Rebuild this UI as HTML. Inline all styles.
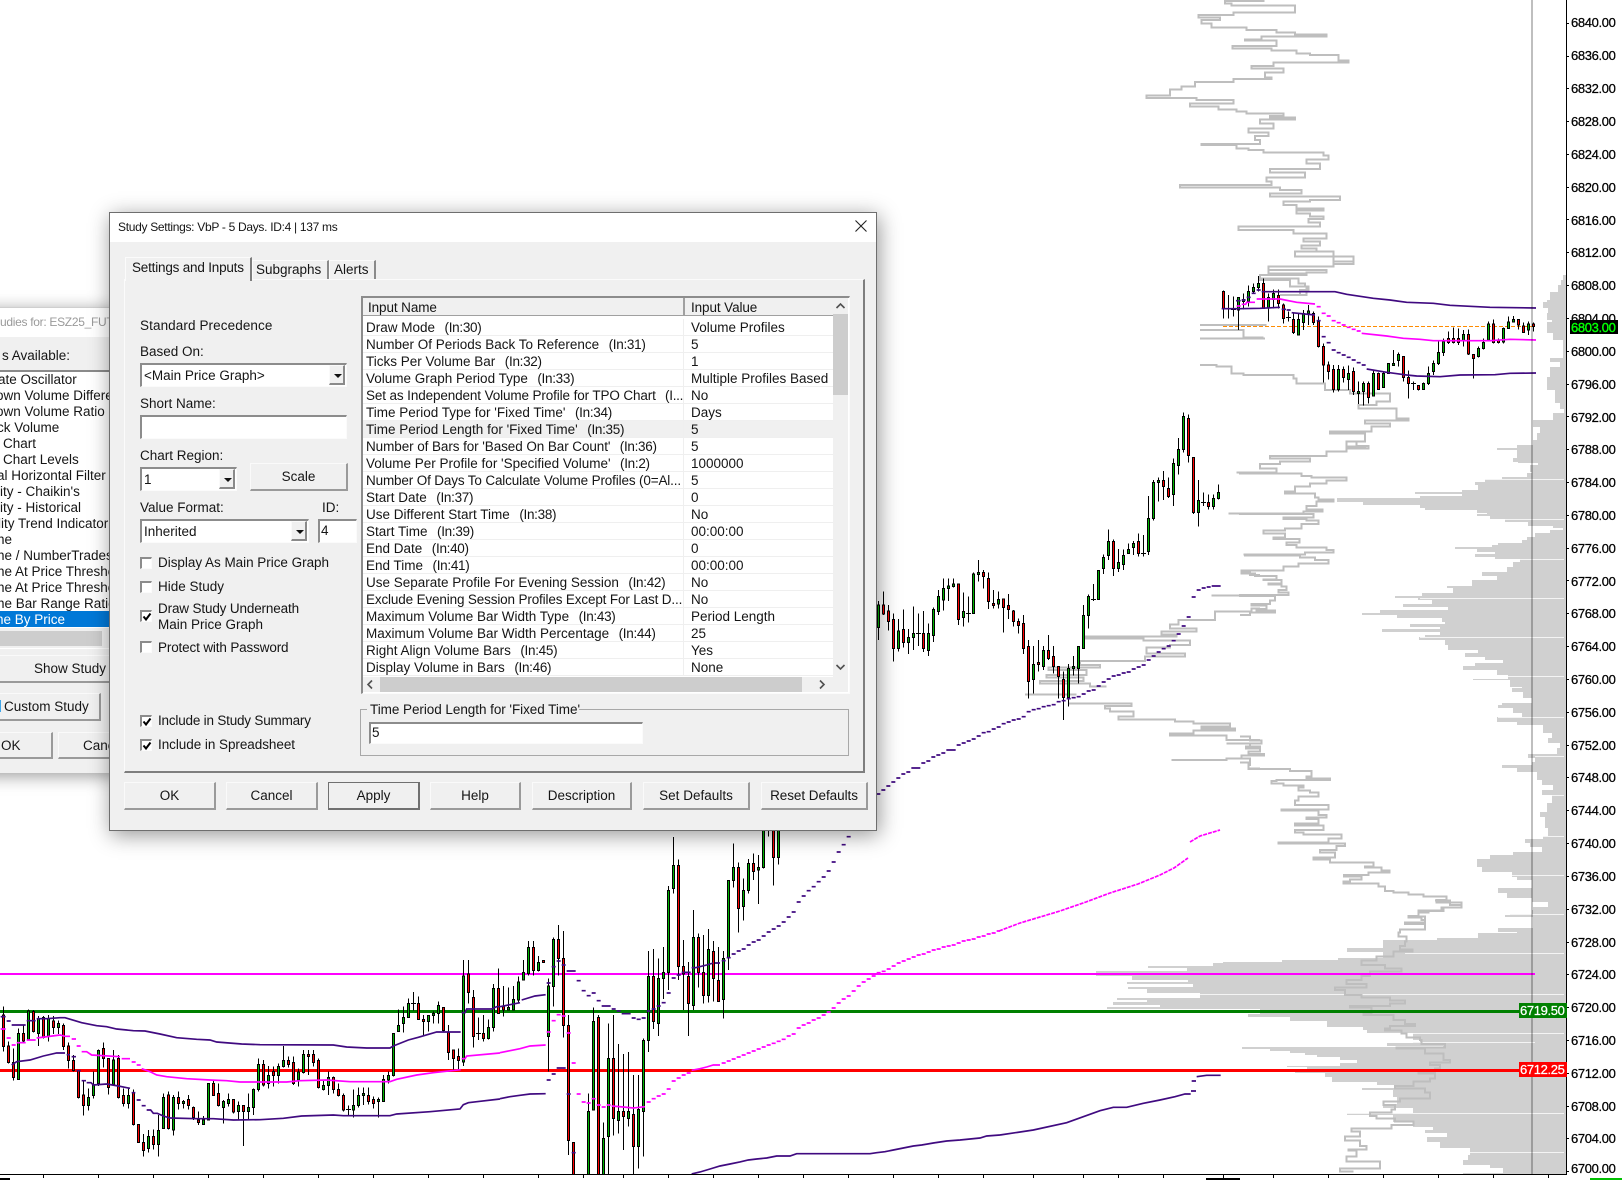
<!DOCTYPE html>
<html><head><meta charset="utf-8"><title>Study Settings</title>
<style>
html,body{margin:0;padding:0;background:#fff}
body{width:1622px;height:1180px;position:relative;overflow:hidden;font-family:"Liberation Sans",sans-serif;color:#111}
.a{position:absolute;box-sizing:border-box}
.l{position:absolute;white-space:pre;font-size:13.5px;line-height:16px;color:#151515;margin-top:1px}
.b{position:absolute;box-sizing:border-box;background:#f0f0f0;border-style:solid;border-width:1px 2px 2px 1px;border-color:#fafafa #9a9a9a #9a9a9a #fafafa;text-align:center;font-size:13.5px;white-space:pre;color:#151515;padding-top:1px}
.s{position:absolute;box-sizing:border-box;background:#fff;border-style:solid;border-width:2px 1px 1px 2px;border-color:#8c8c8c #fbfbfb #fbfbfb #8c8c8c;font-size:13.5px;white-space:pre;color:#151515;padding-top:1px}
.d{position:absolute;box-sizing:border-box;background:#f0f0f0;border-style:solid;border-width:1px 2px 2px 1px;border-color:#fafafa #8a8a8a #8a8a8a #fafafa}
.d:after{content:"";position:absolute;left:4px;top:8px;border-style:solid;border-width:4px 4px 0 4px;border-color:#111 transparent transparent transparent}
.c{position:absolute;box-sizing:border-box;width:12px;height:12px;background:#fff;border-style:solid;border-width:2px 1px 1px 2px;border-color:#8c8c8c #fbfbfb #fbfbfb #8c8c8c}
.c svg{position:absolute;left:-1px;top:-1px}
.r{position:absolute;left:363px;width:470px;height:17px;border-bottom:1px solid #efefef;box-sizing:border-box;font-size:13.5px;line-height:16px;white-space:pre;color:#151515}
.r span{position:absolute;top:1px}
.r .n{left:3px;width:317px;overflow:hidden}
.r .v{left:328px}
.r i{font-style:normal;margin-left:2px;letter-spacing:-.3px}
.r:after{content:"";position:absolute;left:320px;top:0;width:1px;height:17px;background:#efefef}
</style></head><body>
<svg class="a" style="left:0;top:0" width="1622" height="1180" viewBox="0 0 1622 1180" xmlns="http://www.w3.org/2000/svg">
<!-- filled profile -->
<path fill="#d0d0d0" shape-rendering="crispEdges" d="M1566 275H1563V280H1561V285H1558V292H1550V300H1547V302H1543V308H1548V313H1547V320H1552V322H1547V333H1553V340H1563V350H1563V358H1550V362H1560V367H1550V377H1547V390H1555V403H1560V409H1564V413H1553V420H1533V427H1540V433H1537V440H1533V445H1517V448H1497V450H1517V458H1513V462H1518V463H1538V465H1530V472H1532V473H1527V477H1502V479H1485V482H1475V485H1478V490H1462V492H1415V494H1462V496H1420V498H1337V502H1363V505H1420V508H1425V510H1477V513H1487V514H1477V516H1490V519H1505V522H1528V526H1553V528H1563V530H1550V533H1535V537H1527V540H1522V543H1498V545H1492V547H1455V549H1477V552H1495V554H1475V557H1495V559H1520V562H1513V567H1507V572H1482V576H1497V580H1472V586H1447V588H1453V593H1422V596H1395V598H1418V600H1432V604H1403V607H1448V610H1380V613H1362V615H1397V618H1442V622H1445V624H1410V627H1440V629H1382V632H1440V635H1425V637H1419V640H1445V645H1448V650H1478V653H1465V657H1485V660H1503V663H1475V666H1463V670H1497V675H1508V679H1473V680H1510V687H1522V688H1512V692H1523V698H1532V703H1502V705H1498V708H1513V713H1522V717H1497V722H1517V725H1543V733H1552V738H1548V743H1560V748H1557V754H1528V758H1535V762H1532V765H1502V768H1517V772H1537V780H1542V785H1553V790H1542V795H1552V803H1547V812H1540V817H1545V828H1548V836H1543V839H1525V843H1530V847H1542V852H1513V855H1490V859H1477V867H1482V872H1512V877H1517V880H1532V888H1498V893H1507V898H1532V902H1548V907H1533V910H1532V915H1505V917H1533V928H1498V932H1517V933H1478V938H1437V940H1383V948H1347V952H1383V958H1338V960H1282V962H1223V963H1213V966H1148V968H1187V971H1096V976H1132V980H1188V982H1127V984H1193V987H1128V989H1147V993H1200V998H1117V1000H1147V1002H1113V1005H1160V1007H1107V1009H1260V1014H1248V1017H1290V1021H1327V1027H1363V1030H1367V1033H1413V1040H1420V1043H1387V1046H1443V1047H1242V1049H1270V1051H1290V1053H1305V1055H1317V1057H1340V1060H1357V1063H1340V1066H1287V1067H1307V1070H1295V1073H1325V1077H1332V1082H1377V1085H1395V1088H1362V1090H1393V1097H1397V1104H1383V1108H1413V1113H1347V1115H1393V1122H1413V1127H1433V1130H1425V1133H1447V1137H1427V1142H1440V1148H1470V1155H1468V1160H1463V1165H1490V1168H1503V1173H1463V1174H1566Z"/>
<path stroke="#f4f4f4" stroke-width="1" fill="none" shape-rendering="crispEdges" d="M1485 479.5H1564M1505 519.5H1564M1520 559.5H1564M1420 598.5H1564M1420 637.5H1564M1508 676.5H1564M1498 717.5H1564M1535 756.5H1564M1552 795.5H1564M1543 836.5H1564M1512 875.5H1564M1510 914.5H1564M1405 953.5H1564M1200 994.5H1564M1413 1033.5H1564M1413 1042.5H1535M1347 1113.5H1564M1470 1152.5H1564"/>
<!-- outline profile -->
<g fill="none" stroke="#bebebe" stroke-width="6" shape-rendering="crispEdges">
<g transform="translate(1100,0) scale(.33333)"><path d="M490 0V3H375V10H395V17H585V38H400V45H295V52H360V60H305V70H335V82H440V90H530V97H585V103H680V110H485V118H435V122H530V138H398V145H515V152H590V160H630V165H715V182H745V187H520V198H455V205H550V217H495V232H515V237H400V246H285V260H245V268H210V287H140V294H290V300H400V310H270V320H355V328H410V335H440V340H550V348H510V353H585V358H480V370H520V385H445V398H505V408H465V420H480V432H305V435H410V445H445V450H490V458H670V467H685V478H620V490H660V507H510V518H615V532H500V545H515V555H240V562H540V570H605V580H510V590H720V600H630V605H550V615H590V625H670V632H590V640H630V650H670V657H625V668H660V680H415V690H580V700H680V715H610V725H660V737H605V745H650V755H585V770H700V785H760V792H700V800H505V810H680V818H620V825H480V835H595V850H615V860H625V870H600V885H620"/></g>
<g transform="translate(1200,250) scale(.33333)"><path d="M285 5H400V20H460V35H400V50H205V70H320V75H180V90H270V110H320V135H240M0 225H200M0 240H130V262H190M0 265H195M0 345H50V350H95V370H130V375H280V385H290V400H375V420H450V430H570V455H530V465H475V475H590V505H625V512H495V520H570V530H515V545H390V550H495V575H440V590H500"/></g>
<g transform="translate(860,400) scale(.33333)"><path d="M1130 217H1200M1105 340H1200M1150 463H1200M1148 515H1170V525H1200M1055 587H1200M1200 625H1175V635H1065V650H1065V660H955V673H930V685H1010V695H905V703H950V710H675V715H850V722H990V735H930V742H860V760H975V770H855V783H660V795H720V802H565V810H680V825H560V833H670V843H540V850H690V860H740M495 883H650M625 910H815V918H735V925H750V935H820V950H775V958H945V965H1000V970H1110V980H1025V985H1125V992H1000V1000H930V1007H1100V1020H1200M1100 1030H1170V1040H1195M1155 1045H1200M935 1080H1100V1075H1170V1095H1165V1105H1200"/></g>
<g transform="translate(1240,440) scale(.33333)"><path d="M320 5H350V18H385V25H320V35H260V48H90V55H210V65H120V72H60V85H110V97H0V100H185V108H215V112H320V122H260V130H210V140H165V155H135V160H225V172H235V178H280V185H230V198H200V208H248V215H190V220H0V222H220V232H130V237H200V242H235V252H185V265H135V272H70V280H135V292H100V297H178V308H140V315H170V322H260V330H280V338H195V343H15V347H180V352H225V360H265V370H175V380H130V392H5V400H45V408H110V418H70V420H125V430H85V433H125V440H140V450H115V457H145V465H0V468H105V482H90V492H35V497H80V507H50V512H105V517H30V525H0"/></g>
<g transform="translate(1240,680) scale(.33333)"><path d="M0 170H30V182H65V190H0M15 200H60V215H25V222H72V227H5V235H0M0 248H25V267H150V273H215V290H200V295H270V300H110V303H95V310H130V316H190V322H175V332H210V338H235V350H175V362H165V375H265V388H125V392H235V405H260V412H200V417H235V430H165V437H250V450H165V457H190V463H305V475H265V487H115V490H315V498H290V510H240V518H285V532H220V538H270V548H400V560H375V563H425V572H448V578H385V585H312V590H365V598H330V605H310V610H415V620H435V633H460V637H505V643H550V650H620V660H590V668H665V682H605V692H535V708H505V712H545V720H555"/></g>
<g transform="translate(1100,900) scale(.33333)"><path d="M1005 2H1050V15H1085V22H1030V33H985V38H955V48H925V50H975V68H915V72H975V88H900V98H895V110H920V125H915V138H900V148H938V155H880V170H830V182H785V195H855V205H905V215H810V228H785V240H740V252H800V262H705V270H735V285H785V293H870V302H915V310H870V318H750V322H815V342H790V345H880V360H915V372H945V378H870V385H855V392H905V400H920V412H960V420H965V432H1035V442H890V445H975V460H1030V480H1050V488H990V495H1020V505H1005V518H955V520H1005V535H990V545H940V558H885V565H975V578H990V595H900V605H850V615H885V628H875V638H810V648H830V655H885V665H940V675H875V685H755V695H780V710H735V722H780V738H800V748H745V752H770V770H740V785H840V805H720V815H760"/></g>
</g>
<!-- horizontal lines -->
<g shape-rendering="crispEdges">
<rect x="0" y="973" width="1535" height="2" fill="#f0f"/>
<rect x="0" y="1010" width="1520" height="3" fill="#008000"/>
<rect x="0" y="1069" width="1520" height="3" fill="#f00"/>
</g>
<path d="M1223 326.5H1533" stroke="#ff8c00" stroke-width="1" stroke-dasharray="4 2" shape-rendering="crispEdges"/>
<!-- candles A -->
<g transform="translate(.17,960) scale(.33333)" shape-rendering="crispEdges" stroke="#000" stroke-width="3">
<path fill="none" d="M10 140V275M25 245V310M40 265V362M55 205V358M70 195V250M85 148V240M100 150V218M115 168V258M130 168V235M145 165V245M160 168V222M175 182V222M190 190V270M205 248V325M220 285V335M235 330V415M250 362V467M265 385V452M280 335V415M295 268V378M310 247V322M325 295V403M340 270V375M355 285V415M370 385V440M385 385V445M400 388V497M430 522V590M445 510V578M460 508V568M475 465V590M490 400V505M505 395V508M520 405V527M535 395V448M550 420V446M565 405V448M580 440V480M595 455V495M610 468V495M640 358V408M655 370V440M670 420V490M685 400V440M700 418V460M715 425V480M730 436V558M745 400V478M760 385V465M775 295V395M790 300V380M805 318V385M820 320V380M835 310V370M850 258V322M865 290V322M880 290V375M895 325V380M910 270V340M925 270V345M940 270V320M955 295V385M970 360V392M985 335V405M1000 350V400M1015 370V410M1030 400V455M1045 436V468M1037 449H1053M1060 388V472M1075 382V442M1090 382V435M1105 382V434M1120 410V445M1135 412V472M1150 345V425M1165 335V370M1180 220V350M1195 148V215M1210 140V218M1225 115V172M1240 96V152M1232 130H1248M1255 110V178M1270 165V225M1285 165V215M1300 155V190M1315 125V190M1330 142V215M1345 195V300M1360 270V328M1375 265V328M1390 0V318M1405 0V130M1420 90V262M1435 172V240M1427 220H1443M1450 165V245M1465 178V238M1480 72V215M1495 25V160"/>
<path fill="#00b400" d="M52 220h6V358h-6zM82 153h6V238h-6zM112 175h6V220h-6zM142 175h6V228h-6zM172 190h6V203h-6zM262 412h6V436h-6zM277 375h6V406h-6zM292 272h6V370h-6zM337 300h6V373h-6zM382 406h6V430h-6zM442 530h6V565h-6zM472 512h6V553h-6zM487 412h6V505h-6zM517 412h6V510h-6zM547 424h6V430h-6zM607 480h6V493h-6zM622 370h6V480h-6zM667 425h6V442h-6zM682 418h6V430h-6zM712 436h6V454h-6zM742 442h6V454h-6zM757 388h6V442h-6zM772 313h6V388h-6zM802 346h6V370h-6zM832 319h6V346h-6zM847 302h6V319h-6zM892 336h6V360h-6zM907 283h6V337h-6zM967 376h6V388h-6zM982 352h6V376h-6zM1057 436h6V450h-6zM1072 406h6V436h-6zM1087 400h6V406h-6zM1132 418h6V425h-6zM1147 358h6V424h-6zM1162 346h6V360h-6zM1177 220h6V346h-6zM1192 196h6V214h-6zM1207 172h6V190h-6zM1222 130h6V172h-6zM1282 166h6V184h-6zM1297 160h6V166h-6zM1312 136h6V160h-6zM1387 48h6V306h-6zM1462 202h6V236h-6zM1477 85h6V202h-6z"/>
<path fill="#f00" d="M7 165h6V260h-6zM22 258h6V308h-6zM37 308h6V352h-6zM67 220h6V243h-6zM97 155h6V215h-6zM127 172h6V232h-6zM157 183h6V202h-6zM187 197h6V260h-6zM202 258h6V302h-6zM217 302h6V332h-6zM232 332h6V412h-6zM247 405h6V436h-6zM307 265h6V295h-6zM322 295h6V382h-6zM352 295h6V412h-6zM367 406h6V430h-6zM397 398h6V493h-6zM412 493h6V548h-6zM427 548h6V572h-6zM457 530h6V554h-6zM502 405h6V505h-6zM532 412h6V430h-6zM562 418h6V436h-6zM577 442h6V473h-6zM592 480h6V487h-6zM637 370h6V407h-6zM652 400h6V436h-6zM697 418h6V456h-6zM727 436h6V454h-6zM787 313h6V375h-6zM817 335h6V346h-6zM862 302h6V313h-6zM877 307h6V370h-6zM922 283h6V290h-6zM937 283h6V307h-6zM952 302h6V382h-6zM997 352h6V388h-6zM1012 388h6V407h-6zM1027 406h6V450h-6zM1102 406h6V425h-6zM1117 418h6V430h-6zM1252 130h6V178h-6zM1267 178h6V184h-6zM1327 142h6V212h-6zM1342 218h6V277h-6zM1357 270h6V296h-6zM1372 290h6V302h-6zM1402 42h6V98h-6zM1417 112h6V230h-6zM1447 220h6V236h-6zM1492 85h6V160h-6z"/>
</g>
<!-- candles B -->
<g transform="translate(500.17,830) scale(.33333)" shape-rendering="crispEdges" stroke="#000" stroke-width="3">
<path fill="none" d="M10 468V560M25 473V540M40 468V540M55 440V520M70 390V450M85 333V436M100 333V436M115 378V425M145 445V725M160 322V530M175 285V436M190 303V622M205 555V975M265 790V1035M280 532V842M295 555V1035M310 877V1035M325 580V1035M340 555V916M355 642V910M370 672V960M385 666V890M400 735V1035M415 735V1016M430 625V980M445 363V666M460 357V597M475 385V618M490 351V507M505 168V480M520 21V190M535 88V450M550 330V540M565 396V618M580 240V540M595 310V472M610 315V520M625 297V517M640 333V515M655 351V515M670 363V566M685 150V420M700 40V173M715 98V308M730 145V272M745 87V190M760 70V150M775 75V222M790 0V116M805 0V20M820 0V167M835 0V104"/>
<path fill="#00b400" d="M22 532h6V540h-6zM37 508h6V540h-6zM52 456h6V510h-6zM67 427h6V450h-6zM82 352h6V430h-6zM112 397h6V422h-6zM142 468h6V620h-6zM157 328h6V470h-6zM262 844h6V1035h-6zM277 574h6V840h-6zM307 925h6V1035h-6zM322 685h6V920h-6zM352 844h6V872h-6zM382 844h6V865h-6zM412 838h6V950h-6zM427 631h6V845h-6zM442 439h6V632h-6zM472 445h6V580h-6zM487 427h6V445h-6zM502 181h6V427h-6zM517 106h6V175h-6zM577 322h6V527h-6zM622 358h6V496h-6zM667 385h6V508h-6zM682 151h6V382h-6zM697 112h6V152h-6zM727 181h6V230h-6zM742 100h6V181h-6zM772 112h6V120h-6zM787 -3h6V112h-6zM832 -3h6V82h-6z"/>
<path fill="#f00" d="M7 530h6V540h-6zM97 352h6V422h-6zM127 392h6V398h-6zM172 328h6V386h-6zM187 385h6V586h-6zM202 586h6V932h-6zM217 937h6V1035h-6zM292 562h6V1035h-6zM337 685h6V866h-6zM367 844h6V860h-6zM397 853h6V950h-6zM457 439h6V574h-6zM532 106h6V410h-6zM547 409h6V432h-6zM562 439h6V520h-6zM592 322h6V428h-6zM607 427h6V496h-6zM637 364h6V446h-6zM652 451h6V514h-6zM712 112h6V236h-6zM757 100h6V124h-6zM817 -3h6V83h-6z"/>
</g>
<!-- candles C -->
<g transform="translate(860.17,400) scale(.33333)" shape-rendering="crispEdges" stroke="#000" stroke-width="3">
<path fill="none" d="M55 603V720M70 575V645M85 615V692M100 640V785M115 657V755M130 628V743M145 687V762M160 620V750M175 640V738M167 700H183M190 633V756M205 670V768M220 622V726M235 570V645M250 535V632M265 535V603M280 535V563M295 552V675M310 577V680M325 590V668M317 640H333M340 517V642M355 480V545M370 510V565M385 517V627M400 570V626M415 575V626M430 597V698M445 582V657M460 630V680M475 655V700M490 645V762M505 720V895M520 738V880M535 720V815M550 738V810M565 705V780M580 738V820M595 800V895M610 815V960M625 792V920M640 768V827M655 740V850M670 615V746M685 583V686M700 552V603M692 598H708M715 510V600M730 463V522M745 388V480M760 418V528M775 447V516M790 448V510M805 430V462M820 423V465M835 400V470M850 405V470M842 460H858M865 288V465M880 240V362M895 232V305M910 213V300M925 232V294M940 175V318M955 114V224M970 37V158M985 43V188M1000 172V342M1015 240V380M1030 277V318M1022 308H1038M1045 283V328M1060 283V328M1075 253V298"/>
<path fill="#00b400" d="M52 615h6V683h-6zM112 693h6V746h-6zM142 712h6V728h-6zM157 700h6V712h-6zM202 700h6V752h-6zM217 628h6V707h-6zM232 590h6V635h-6zM247 565h6V600h-6zM262 558h6V566h-6zM277 552h6V560h-6zM307 634h6V653h-6zM337 522h6V640h-6zM352 517h6V523h-6zM412 598h6V612h-6zM517 793h6V838h-6zM547 751h6V799h-6zM622 805h6V893h-6zM637 799h6V806h-6zM652 740h6V806h-6zM667 646h6V745h-6zM682 589h6V646h-6zM712 511h6V598h-6zM727 472h6V505h-6zM742 424h6V466h-6zM772 487h6V505h-6zM787 466h6V493h-6zM802 448h6V460h-6zM817 430h6V442h-6zM862 355h6V455h-6zM877 247h6V356h-6zM892 241h6V247h-6zM937 190h6V283h-6zM952 148h6V196h-6zM967 49h6V148h-6zM1012 301h6V338h-6zM1057 296h6V320h-6zM1072 278h6V296h-6z"/>
<path fill="#f00" d="M67 615h6V642h-6zM82 633h6V665h-6zM97 658h6V746h-6zM127 688h6V728h-6zM187 700h6V746h-6zM292 552h6V659h-6zM367 517h6V529h-6zM382 535h6V605h-6zM397 610h6V617h-6zM427 597h6V623h-6zM442 616h6V628h-6zM457 633h6V665h-6zM472 664h6V677h-6zM487 670h6V746h-6zM502 739h6V845h-6zM532 787h6V793h-6zM562 751h6V776h-6zM577 770h6V800h-6zM592 800h6V830h-6zM607 838h6V893h-6zM757 424h6V505h-6zM832 424h6V461h-6zM907 241h6V259h-6zM922 265h6V289h-6zM982 55h6V166h-6zM997 172h6V338h-6zM1042 308h6V319h-6z"/>
</g>
<!-- candles D -->
<g transform="translate(1200.17,250) scale(.33333)" shape-rendering="crispEdges" stroke="#000" stroke-width="3">
<path fill="none" d="M70 122V205M85 135V205M77 175H93M100 140V200M92 178H108M115 142V240M130 130V178M145 107V170M160 100V130M175 78V125M190 85V175M205 130V215M220 118V175M235 118V175M250 160V220M265 185V215M257 203H273M280 190V252M295 190V255M310 180V240M325 165V225M340 185V225M355 200V292M370 280V398M385 335V388M400 345V428M415 345V425M430 350V398M445 347V420M460 352V435M475 395V462M490 395V467M505 395V460M520 362V440M535 368V420M550 365V412M565 340V370M580 300V348M595 308V350M610 318V395M625 362V445M640 395V420M632 400H648M655 405V422M670 398V420M685 350V405M700 332V375M715 275V345M730 265V318M745 245V282M760 232V280M775 235V285M790 240V290M805 238V315M820 312V385M835 290V322M850 265V298M865 215V272M880 208V280M895 265V280M910 232V280M925 200V235M940 198V218M955 208V238M970 218V248M985 215V255M1000 218V245"/>
<path fill="#00b400" d="M112 142h6V180h-6zM127 148h6V155h-6zM142 125h6V155h-6zM157 112h6V125h-6zM172 100h6V113h-6zM202 142h6V172h-6zM217 130h6V148h-6zM292 208h6V255h-6zM307 190h6V218h-6zM322 183h6V190h-6zM412 358h6V418h-6zM442 370h6V388h-6zM472 425h6V430h-6zM487 400h6V425h-6zM517 370h6V438h-6zM547 370h6V412h-6zM562 340h6V370h-6zM577 340h6V346h-6zM592 313h6V332h-6zM667 400h6V418h-6zM682 370h6V400h-6zM697 340h6V365h-6zM712 308h6V340h-6zM727 275h6V308h-6zM787 253h6V272h-6zM832 295h6V320h-6zM847 278h6V296h-6zM862 222h6V270h-6zM907 235h6V276h-6zM922 216h6V235h-6zM937 208h6V216h-6zM982 222h6V240h-6z"/>
<path fill="#f00" d="M67 124h6V175h-6zM187 100h6V175h-6zM232 136h6V160h-6zM247 165h6V205h-6zM277 208h6V248h-6zM337 190h6V218h-6zM352 215h6V290h-6zM367 290h6V345h-6zM382 345h6V365h-6zM397 358h6V418h-6zM427 358h6V382h-6zM457 365h6V425h-6zM502 400h6V442h-6zM532 370h6V418h-6zM607 320h6V382h-6zM622 382h6V400h-6zM652 406h6V418h-6zM742 265h6V278h-6zM757 265h6V278h-6zM772 265h6V278h-6zM802 253h6V312h-6zM817 313h6V325h-6zM877 222h6V278h-6zM892 272h6V278h-6zM952 208h6V225h-6zM967 228h6V248h-6zM997 222h6V230h-6z"/>
</g>
<!-- indicators -->
<g fill="none" stroke-width="5">
<g transform="translate(0,960) scale(.33333)">
<path stroke="#400a80" d="M2 170H17M20 183H32M35 195H77M80 182H107M110 176H140L180 173H195L225 182L245 188L290 197L320 200L350 207L400 212L435 213L480 222L530 233L590 238L630 240L650 246L725 252L780 254L1000 255L1040 261L1100 264H1170L1180 258L1225 240L1255 232L1310 216H1382M1385 158H1395L1400 147H1475L1490 140H1500"/>
<path stroke="#400a80" d="M35 315L50 305L90 300L130 288L170 279H195M200 284H210M215 290H228M230 332H242M245 362H258M260 368H273L280 375L320 372L355 378L390 385M395 398H406M410 420H422M425 437H437M440 450H452L460 460H472L490 468L510 474L590 476H640L700 480L780 479L850 475L905 468L1000 465L1030 467H1170L1190 462L1290 455L1380 447L1390 434L1405 428L1440 424L1500 417"/>
<path stroke="#f0f" d="M2 207H17M20 234H32M35 255H47M50 248H77M80 240H107M110 234L180 225L195 229H210M215 237H228M230 258H242M245 275H260L275 285L360 290M365 296H390M395 306H407M410 315H422M425 326L450 335L470 345L500 350L560 356L630 360L680 362L720 366H860L900 362L980 360L1050 365H1170L1190 358L1250 345L1300 338L1382 329M1385 296H1395L1400 288L1500 279"/>
</g>
<g transform="translate(500,830) scale(.33333)">
<path stroke="#400a80" d="M0 530L60 518M65 510L105 498L137 494M140 459H152M155 410H167M170 393H182M185 405H197M200 423H227M230 452H242M245 482H257M260 497H272M275 489H287M290 512H302M305 528H332M335 537H347M350 543H362M365 551H392M395 564H407M410 568H422M425 564H437M440 543H452M455 537H467M470 528H482M485 518H497M500 489H512M515 444H527M530 435H542M545 427H572M575 413H587L620 405L640 399M645 399H660M665 392H677M680 383H692M695 372H707M710 363H722M725 357H737M740 345H752M755 336H767M770 330H782M785 318H797M800 306H812M815 297H827M830 288H842M845 276H857M860 261H872M875 246H887M890 216H902M905 198H917M920 182H932M935 170H947M950 155H962M965 141H977M980 123H992M995 96H1007M1010 66H1022M1025 44H1037M1040 20H1052"/>
<path stroke="#400a80" d="M0 806L30 800L60 796L90 792L137 791M140 750H152M155 732H167M170 714H197M200 792H212M215 968H227M575 1032L600 1026L630 1017L660 1008L690 1002L720 996L745 990L770 987L800 984L830 978H870L890 971H1110L1130 968L1155 965L1180 960L1210 954L1240 948L1265 945L1300 939L1340 933L1380 930L1440 924L1460 918L1500 915"/>
<path stroke="#f0f" d="M0 668L30 662L60 656L90 648L137 645M140 606H152M155 572H167M170 554H182M185 558H197M200 609H212M215 699H227M230 792H242M245 816H257M260 819H272M275 806H287M290 825H302M305 831H317M320 825H332M335 828L370 831L400 834L435 830M440 816H452M455 806H467M470 798H482M485 792H497M500 777H512M515 753H527M530 744H542M545 735H557M560 729H572M575 721L600 716L620 711L640 705H660M665 699H677M680 693H692M695 687H707M710 681H722M725 675H737M740 669H752M755 663H767M770 657H782M785 651H797M800 645H812M815 640H827M830 634H842M845 628H857M860 618H872M875 612H887M890 594H902M905 585H917M920 579H932M935 570H947M950 564H962M965 555H977M980 546H992M995 534H1007M1010 519H1022M1025 507H1037M1040 498H1052M1055 483H1067M1070 468H1082M1085 456H1097M1100 447H1112M1115 438H1127M1130 428H1142M1145 424H1157M1160 417H1172M1175 408H1187M1190 399H1202M1205 393H1217M1220 387H1232M1235 381H1247M1250 375H1262M1265 372H1277M1280 366H1292M1295 360H1307M1310 357H1322M1325 351H1337M1340 348H1352M1355 345H1367M1370 339H1382M1385 333H1397M1400 330H1412M1415 327H1427M1430 321H1442M1445 318H1457M1460 312H1472M1475 309H1487M1490 303H1500"/>
</g>
<g transform="translate(860,400) scale(.33333)">
<path stroke="#400a80" d="M49 1182H61M64 1170H76M79 1158H91M94 1146H106M109 1134H121M124 1122H136M139 1116H151M154 1104H181M184 1089H196M199 1083H211M214 1071H226M229 1065H241M244 1059H256M259 1050H287M290 1035H302M305 1029H317M320 1023H332M335 1017H347M350 1008H362M365 998H377M380 995H392M395 987H407M410 981H422M425 971H437M440 966H452M455 960H467M470 957H482M485 950H497M500 935H512M515 929H527M530 926H542M545 920H557M560 917H572M575 914H587M590 905H602M605 902H617M620 896H632M635 893H647M650 890H662M665 882H677M680 873H692M695 870H707M710 858H722M725 846H737M740 837H752M755 828H767M770 825H782M785 819H797M800 816H812M815 807H827M830 801H842M845 795H857M860 780H872M875 768H887M890 756H902M905 746H917M920 738H932M935 722H947M950 702H962M965 678H977M980 651H992M995 591H1007M1010 570H1022M1025 564H1037M1040 561H1052M1055 558H1082"/>
</g>
<g transform="translate(1100,900) scale(.33333)">
<path stroke="#400a80" d="M-300 705L-200 690L-100 668L0 632L40 622H80L130 610L180 600L225 590L255 582H272M273 573H288M275 543H288M290 530L320 526H362"/>
</g>
<path stroke="#f0f" stroke-width="1.7" d="M999 931L1020 923L1040 917L1060 911L1086 902L1110 893L1138 884L1160 875L1174 868L1188 858M1190 842L1200 836L1220 830" stroke-dasharray="4 1"/>
<g transform="translate(1200,250) scale(.33333)">
<path stroke="#400a80" d="M108 152H122M125 150H137M140 142H152M155 130H167M170 120H182M185 125H300L350 125H405L440 133L520 145L570 150L620 157L700 160L750 166L870 172L1008 174"/>
<path stroke="#400a80" d="M65 176H120L180 175L240 172M245 178H258M260 180H272M275 188L345 195M350 212H362M365 260H377M380 278H392M395 300H407M410 308H422M425 315H437M440 322H452M455 330H467M470 338H482M485 345H497M500 357L560 367L620 375L650 378L720 380L780 375L885 374L930 370L1008 369"/>
<path stroke="#f0f" d="M110 168H122M125 163H137L140 157H165M170 147H240L290 157L345 162M350 170H362M365 190H377M380 198H392M395 212H407M410 218H422M425 225H437M440 232H452M455 238H467M470 243H482M485 250L560 258L610 265L660 268L700 272H870L930 268L1008 270"/>
</g>
</g>
<!-- vertical cursor line and axes -->
<rect x="1531" y="0" width="2" height="1174" fill="#000" opacity=".25" shape-rendering="crispEdges"/>
<rect x="0" y="1174" width="1622" height="6" fill="#fff"/>
<path d="M0 1174.5H1567M1566.5 0V1175" stroke="#000" stroke-width="1" fill="none" shape-rendering="crispEdges"/>
<path stroke="#000" stroke-width="1" shape-rendering="crispEdges" d="M43.5 1174V1178M98.5 1174V1178M153.5 1174V1178M208.5 1174V1178M263.5 1174V1178M318.5 1174V1178M373.5 1174V1178M428.5 1174V1178M483.5 1174V1178M538.5 1174V1178M583.5 1174V1178M623.5 1174V1178M668.5 1174V1178M713.5 1174V1178M758.5 1174V1178M803.5 1174V1178M848.5 1174V1178M893.5 1174V1178M938.5 1174V1178M983.5 1174V1178M1033.5 1174V1178M1083.5 1174V1178M1118.5 1174V1178M1163.5 1174V1178M1223.5 1174V1178M1273.5 1174V1178M1328.5 1174V1178M1383.5 1174V1178M1438.5 1174V1178M1493.5 1174V1178M1548.5 1174V1178"/>
<rect x="0" y="1178" width="10" height="2" fill="#000"/><rect x="1206" y="1178" width="34" height="2" fill="#000"/><rect x="1590" y="1178" width="32" height="2" fill="#00c000"/>
<path stroke="#000" stroke-width="1" shape-rendering="crispEdges" d="M1566 23.5h3M1566 56.5h3M1566 88.5h3M1566 121.5h3M1566 154.5h3M1566 187.5h3M1566 219.5h3M1566 252.5h3M1566 285.5h3M1566 318.5h3M1566 351.5h3M1566 384.5h3M1566 416.5h3M1566 449.5h3M1566 482.5h3M1566 515.5h3M1566 548.5h3M1566 580.5h3M1566 613.5h3M1566 646.5h3M1566 679.5h3M1566 712.5h3M1566 745.5h3M1566 777.5h3M1566 810.5h3M1566 843.5h3M1566 876.5h3M1566 909.5h3M1566 942.5h3M1566 974.5h3M1566 1007.5h3M1566 1040.5h3M1566 1073.5h3M1566 1106.5h3M1566 1138.5h3M1566 1171.5h3"/>
<g font-family="'Liberation Sans',sans-serif" font-size="13" letter-spacing="-.35" fill="#000" stroke="#000" stroke-width=".25">
<text x="1571" y="27">6840.00</text><text x="1571" y="60">6836.00</text><text x="1571" y="93">6832.00</text><text x="1571" y="126">6828.00</text><text x="1571" y="159">6824.00</text><text x="1571" y="192">6820.00</text><text x="1571" y="225">6816.00</text><text x="1571" y="257">6812.00</text><text x="1571" y="290">6808.00</text><text x="1571" y="323">6804.00</text><text x="1571" y="356">6800.00</text><text x="1571" y="389">6796.00</text><text x="1571" y="422">6792.00</text><text x="1571" y="454">6788.00</text><text x="1571" y="487">6784.00</text><text x="1571" y="520">6780.00</text><text x="1571" y="553">6776.00</text><text x="1571" y="586">6772.00</text><text x="1571" y="618">6768.00</text><text x="1571" y="651">6764.00</text><text x="1571" y="684">6760.00</text><text x="1571" y="717">6756.00</text><text x="1571" y="750">6752.00</text><text x="1571" y="782">6748.00</text><text x="1571" y="815">6744.00</text><text x="1571" y="848">6740.00</text><text x="1571" y="881">6736.00</text><text x="1571" y="914">6732.00</text><text x="1571" y="947">6728.00</text><text x="1571" y="979">6724.00</text><text x="1571" y="1012">6720.00</text><text x="1571" y="1045">6716.00</text><text x="1571" y="1078">6712.00</text><text x="1571" y="1111">6708.00</text><text x="1571" y="1143">6704.00</text><text x="1571" y="1173">6700.00</text>
</g>
<rect x="1570" y="320" width="48" height="14" fill="#000" shape-rendering="crispEdges"/>
<text x="1571" y="332" font-family="'Liberation Sans',sans-serif" font-size="13" letter-spacing="-.35" fill="#0f0" stroke="#0f0" stroke-width=".4">6803.00</text>
<rect x="1519" y="1003" width="48" height="15" fill="#008000" shape-rendering="crispEdges"/>
<text x="1520" y="1015" font-family="'Liberation Sans',sans-serif" font-size="13" letter-spacing="-.35" fill="#fff" stroke="#fff" stroke-width=".25">6719.50</text>
<rect x="1519" y="1062" width="48" height="15" fill="#f00" shape-rendering="crispEdges"/>
<text x="1520" y="1074" font-family="'Liberation Sans',sans-serif" font-size="13" letter-spacing="-.35" fill="#fff" stroke="#fff" stroke-width=".25">6712.25</text>
</svg>

<!-- back dialog -->
<div class="a" style="left:-20px;top:307px;width:140px;height:466px;background:#f0f0f0;box-shadow:0 3px 16px rgba(0,0,0,.4)"></div>
<div class="a" style="left:0;top:307px;width:115px;height:30px;background:#fff;border-top:1px solid #cfcfcf"></div>
<div class="l" style="left:0;top:313px;color:#9a9a9a;font-size:12px;letter-spacing:-.3px">udies for: ESZ25_FUT_ES</div>
<div class="l" style="left:2px;top:347px">s Available:</div>
<div class="a" style="left:0;top:370px;width:115px;height:258px;background:#fff;border-top:2px solid #8a8a8a"></div>
<div class="l" style="left:-2px;top:371px">ate Oscillator</div>
<div class="l" style="left:-4px;top:387px">own Volume Difference</div>
<div class="l" style="left:-4px;top:403px">own Volume Ratio</div>
<div class="l" style="left:-3px;top:419px">ck Volume</div>
<div class="l" style="left:3px;top:435px">Chart</div>
<div class="l" style="left:3px;top:451px">Chart Levels</div>
<div class="l" style="left:-3px;top:467px">al Horizontal Filter</div>
<div class="l" style="left:-3px;top:483px">lity - Chaikin's</div>
<div class="l" style="left:-3px;top:499px">lity - Historical</div>
<div class="l" style="left:-2px;top:515px">lity Trend Indicator</div>
<div class="l" style="left:-3px;top:531px">ne</div>
<div class="l" style="left:-3px;top:547px">ne / NumberTrades</div>
<div class="l" style="left:-3px;top:563px">ne At Price Threshold</div>
<div class="l" style="left:-3px;top:579px">ne At Price Threshold</div>
<div class="l" style="left:-3px;top:595px">ne Bar Range Ratio</div>
<div class="a" style="left:0;top:611px;width:115px;height:16px;background:#0078d7"></div>
<div class="l" style="left:-4px;top:611px;color:#fff">ne By Price</div>
<div class="a" style="left:0;top:631px;width:102px;height:15px;background:#cdcdcd"></div>
<div class="a" style="left:0;top:648px;width:115px;height:1px;background:#fff"></div>
<div class="a" style="left:0;top:655px;width:115px;height:28px;border-bottom:2px solid #9a9a9a;border-top:1px solid #fafafa"></div>
<div class="l" style="left:34px;top:660px">Show Study Description</div>
<div class="b" style="left:-2px;top:693px;width:103px;height:28px;line-height:24px;text-align:left;padding-left:5px">Custom Study</div>
<div class="a" style="left:0;top:700px;width:1px;height:12px;background:#3fa5e8"></div>
<div class="b" style="left:-40px;top:732px;width:93px;height:27px;line-height:23px;text-align:left;padding-left:40px">OK</div>
<div class="b" style="left:58px;top:732px;width:93px;height:27px;line-height:23px;text-align:left;padding-left:24px">Cancel</div>

<!-- main dialog -->
<div class="a" style="left:109px;top:212px;width:768px;height:619px;background:#f0f0f0;border:1px solid #6e6e6e;box-shadow:2px 4px 20px rgba(0,0,0,.42)"></div>
<div class="a" style="left:110px;top:213px;width:766px;height:29px;background:#fff"></div>
<div class="l" style="left:118px;top:218px;font-size:12px;letter-spacing:-.3px">Study Settings: VbP - 5 Days. ID:4 | 137 ms</div>
<svg class="a" style="left:854px;top:219px" width="14" height="14"><path d="M1.5 1.5L12.5 12.5M12.5 1.5L1.5 12.5" stroke="#222" stroke-width="1.1" fill="none"/></svg>

<!-- tab panel -->
<div class="a" style="left:124px;top:279px;width:741px;height:494px;border-style:solid;border-width:1px 2px 2px 1px;border-color:#fbfbfb #7e7e7e #7e7e7e #fbfbfb"></div>
<div class="a" style="left:125px;top:257px;width:127px;height:24px;background:#f0f0f0;border-style:solid;border-width:1px 2px 0 1px;border-color:#fbfbfb #7e7e7e #f0f0f0 #fbfbfb"></div>
<div class="l" style="left:132px;top:259px;letter-spacing:-.2px">Settings and Inputs</div>
<div class="a" style="left:252px;top:260px;width:77px;height:19px;border-style:solid;border-width:1px 2px 0 1px;border-color:#fbfbfb #8a8a8a #f0f0f0 #fbfbfb"></div>
<div class="l" style="left:256px;top:261px">Subgraphs</div>
<div class="a" style="left:329px;top:260px;width:47px;height:19px;border-style:solid;border-width:1px 2px 0 1px;border-color:#fbfbfb #8a8a8a #f0f0f0 #fbfbfb"></div>
<div class="l" style="left:334px;top:261px">Alerts</div>

<!-- left controls -->
<div class="l" style="left:140px;top:317px;letter-spacing:.1px">Standard Precedence</div>
<div class="l" style="left:140px;top:343px">Based On:</div>
<div class="s" style="left:140px;top:363px;width:207px;height:24px;line-height:20px;padding-left:2px">&lt;Main Price Graph&gt;</div>
<div class="d" style="left:329px;top:365px;width:16px;height:20px"></div>
<div class="l" style="left:140px;top:395px">Short Name:</div>
<div class="s" style="left:140px;top:415px;width:207px;height:24px"></div>
<div class="l" style="left:140px;top:447px">Chart Region:</div>
<div class="s" style="left:140px;top:467px;width:97px;height:24px;line-height:20px;padding-left:2px">1</div>
<div class="d" style="left:219px;top:469px;width:16px;height:20px"></div>
<div class="b" style="left:250px;top:463px;width:98px;height:28px;line-height:24px">Scale</div>
<div class="l" style="left:140px;top:499px">Value Format:</div>
<div class="l" style="left:322px;top:499px">ID:</div>
<div class="s" style="left:140px;top:519px;width:169px;height:24px;line-height:20px;padding-left:2px">Inherited</div>
<div class="d" style="left:291px;top:521px;width:16px;height:20px"></div>
<div class="s" style="left:318px;top:519px;width:39px;height:24px;line-height:18px;padding-left:1px">4</div>

<div class="c" style="left:140px;top:557px"></div><div class="l" style="left:158px;top:554px;letter-spacing:-.03px">Display As Main Price Graph</div>
<div class="c" style="left:140px;top:581px"></div><div class="l" style="left:158px;top:578px">Hide Study</div>
<div class="c" style="left:140px;top:610px"><svg width="12" height="12"><path d="M2.5 5.5L5 8.5L9.5 2.5" stroke="#000" stroke-width="2" fill="none"/></svg></div>
<div class="l" style="left:158px;top:600px;letter-spacing:-.15px">Draw Study Underneath</div>
<div class="l" style="left:158px;top:616px">Main Price Graph</div>
<div class="c" style="left:140px;top:641px"></div><div class="l" style="left:158px;top:639px;letter-spacing:-.15px">Protect with Password</div>
<div class="c" style="left:140px;top:715px"><svg width="12" height="12"><path d="M2.5 5.5L5 8.5L9.5 2.5" stroke="#000" stroke-width="2" fill="none"/></svg></div>
<div class="l" style="left:158px;top:712px;letter-spacing:-.2px">Include in Study Summary</div>
<div class="c" style="left:140px;top:739px"><svg width="12" height="12"><path d="M2.5 5.5L5 8.5L9.5 2.5" stroke="#000" stroke-width="2" fill="none"/></svg></div>
<div class="l" style="left:158px;top:736px;letter-spacing:-.05px">Include in Spreadsheet</div>

<!-- grid -->
<div class="s" style="left:361px;top:296px;width:489px;height:398px"></div>
<div class="a" style="left:363px;top:298px;width:485px;height:18px;background:#f0f0f0"></div>
<div class="a" style="left:363px;top:315px;width:320px;height:1px;background:#a0a0a0"></div>
<div class="a" style="left:685px;top:315px;width:148px;height:1px;background:#a0a0a0"></div>
<div class="a" style="left:683px;top:298px;width:2px;height:18px;background:#a0a0a0"></div>
<div class="l" style="left:368px;top:299px;letter-spacing:-.1px">Input Name</div>
<div class="l" style="left:691px;top:299px;letter-spacing:-.1px">Input Value</div>
<div class="r" style="top:318.5px"><span class="n">Draw Mode  <i>(In:30)</i></span><span class="v">Volume Profiles</span></div>
<div class="r" style="top:335.5px"><span class="n">Number Of Periods Back To Reference  <i>(In:31)</i></span><span class="v">5</span></div>
<div class="r" style="top:352.5px"><span class="n">Ticks Per Volume Bar  <i>(In:32)</i></span><span class="v">1</span></div>
<div class="r" style="top:369.5px"><span class="n">Volume Graph Period Type  <i>(In:33)</i></span><span class="v">Multiple Profiles Based</span></div>
<div class="r" style="top:386.5px"><span class="n" style="letter-spacing:-.12px">Set as Independent Volume Profile for TPO Chart  <i>(I...</i></span><span class="v">No</span></div>
<div class="r" style="top:403.5px"><span class="n">Time Period Type for 'Fixed Time'  <i>(In:34)</i></span><span class="v">Days</span></div>
<div class="r" style="top:420.5px;background:#f0f0f0"><span class="n">Time Period Length for 'Fixed Time'  <i>(In:35)</i></span><span class="v">5</span></div>
<div class="r" style="top:437.5px"><span class="n" style="letter-spacing:-.08px">Number of Bars for 'Based On Bar Count'  <i>(In:36)</i></span><span class="v">5</span></div>
<div class="r" style="top:454.5px"><span class="n">Volume Per Profile for 'Specified Volume'  <i>(In:2)</i></span><span class="v">1000000</span></div>
<div class="r" style="top:471.5px"><span class="n" style="letter-spacing:-.15px">Number Of Days To Calculate Volume Profiles (0=Al...</span><span class="v">5</span></div>
<div class="r" style="top:488.5px"><span class="n">Start Date  <i>(In:37)</i></span><span class="v">0</span></div>
<div class="r" style="top:505.5px"><span class="n">Use Different Start Time  <i>(In:38)</i></span><span class="v">No</span></div>
<div class="r" style="top:522.5px"><span class="n">Start Time  <i>(In:39)</i></span><span class="v">00:00:00</span></div>
<div class="r" style="top:539.5px"><span class="n">End Date  <i>(In:40)</i></span><span class="v">0</span></div>
<div class="r" style="top:556.5px"><span class="n">End Time  <i>(In:41)</i></span><span class="v">00:00:00</span></div>
<div class="r" style="top:573.5px"><span class="n">Use Separate Profile For Evening Session  <i>(In:42)</i></span><span class="v">No</span></div>
<div class="r" style="top:590.5px"><span class="n" style="letter-spacing:-.15px">Exclude Evening Session Profiles Except For Last D...</span><span class="v">No</span></div>
<div class="r" style="top:607.5px"><span class="n">Maximum Volume Bar Width Type  <i>(In:43)</i></span><span class="v">Period Length</span></div>
<div class="r" style="top:624.5px"><span class="n">Maximum Volume Bar Width Percentage  <i>(In:44)</i></span><span class="v">25</span></div>
<div class="r" style="top:641.5px"><span class="n">Right Align Volume Bars  <i>(In:45)</i></span><span class="v">Yes</span></div>
<div class="r" style="top:658.5px"><span class="n">Display Volume in Bars  <i>(In:46)</i></span><span class="v">None</span></div>
<!-- scrollbars -->
<div class="a" style="left:833px;top:298px;width:15px;height:394px;background:#f0f0f0"></div>
<div class="a" style="left:363px;top:677px;width:485px;height:15px;background:#f0f0f0"></div>
<div class="a" style="left:833px;top:314px;width:15px;height:81px;background:#cdcdcd"></div>
<div class="a" style="left:380px;top:677px;width:422px;height:15px;background:#cdcdcd"></div>
<svg class="a" style="left:834px;top:301px" width="13" height="10"><path d="M2.5 7L6.5 3L10.5 7" stroke="#505050" stroke-width="1.6" fill="none"/></svg>
<svg class="a" style="left:834px;top:662px" width="13" height="10"><path d="M2.5 3L6.5 7L10.5 3" stroke="#505050" stroke-width="1.6" fill="none"/></svg>
<svg class="a" style="left:365px;top:679px" width="10" height="11"><path d="M7 1.5L3 5.5L7 9.5" stroke="#505050" stroke-width="1.6" fill="none"/></svg>
<svg class="a" style="left:817px;top:679px" width="10" height="11"><path d="M3 1.5L7 5.5L3 9.5" stroke="#505050" stroke-width="1.6" fill="none"/></svg>

<!-- group box -->
<div class="a" style="left:360px;top:709px;width:489px;height:47px;border:1px solid #a8a8a8"></div>
<div class="a" style="left:367px;top:702px;width:212px;height:14px;background:#f0f0f0"></div>
<div class="l" style="left:370px;top:701px;letter-spacing:-.05px">Time Period Length for 'Fixed Time'</div>
<div class="s" style="left:369px;top:722px;width:274px;height:22px;line-height:15px;padding-left:1px">5</div>

<!-- bottom buttons -->
<div class="b" style="left:124px;top:782px;width:92px;height:28px;line-height:24px">OK</div>
<div class="b" style="left:226px;top:782px;width:92px;height:28px;line-height:24px">Cancel</div>
<div class="b" style="left:328px;top:782px;width:92px;height:28px;line-height:23px;border:2px solid #707070;border-top-width:1px;border-left-width:1px">Apply</div>
<div class="b" style="left:430px;top:782px;width:91px;height:28px;line-height:24px">Help</div>
<div class="b" style="left:532px;top:782px;width:100px;height:28px;line-height:24px">Description</div>
<div class="b" style="left:643px;top:782px;width:107px;height:28px;line-height:24px;letter-spacing:.02px">Set Defaults</div>
<div class="b" style="left:761px;top:782px;width:107px;height:28px;line-height:24px;letter-spacing:-.05px">Reset Defaults</div>
</body></html>
